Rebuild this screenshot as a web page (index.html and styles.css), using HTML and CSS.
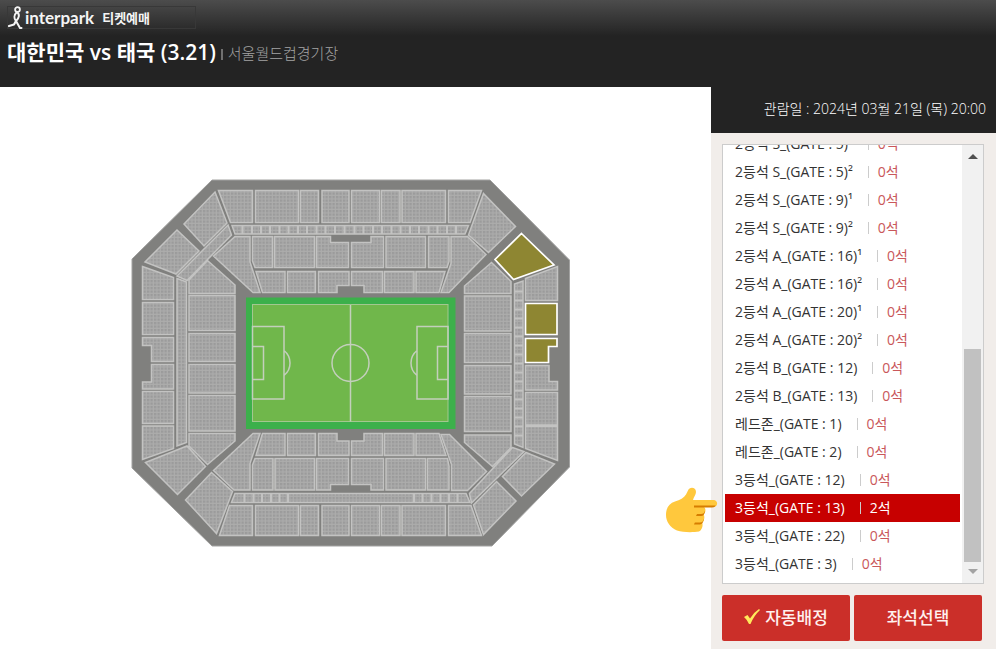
FILE: index.html
```html
<!DOCTYPE html>
<html lang="ko">
<head>
<meta charset="utf-8">
<title>interpark 티켓예매</title>
<link rel="stylesheet" href="styles.css">
</head>
<body>
<div class="app">
  <header class="header">
    <a class="logo" href="#">
      <svg class="logo-mark" width="16" height="24" viewBox="0 0 16 24" aria-hidden="true">
        <g fill="none" stroke="#f4f4f4" stroke-linecap="round" stroke-linejoin="round">
          <circle cx="9.500" cy="3.600" r="2.400" stroke-width="1.800"/>
          <path d="M8.500 6.500C6 9 5.800 12.500 8 15" stroke-width="2"/>
          <path d="M9.500 6.500C12.500 9.500 10.500 12.500 8 15L12 22H13.500" stroke-width="2"/>
          <path d="M8 15L6 18.500L1 20" stroke-width="2.200"/>
        </g>
      </svg>
      <span class="logo-name">interpark</span>
      <span class="logo-sub">티켓예매</span>
    </a>
    <div class="event">
      <h1 class="event-title">대한민국 vs 태국 (3.21)</h1>
      <span class="event-bar"></span>
      <span class="event-place">서울월드컵경기장</span>
    </div>
  </header>

  <div class="content">
    <main class="map">
      <svg class="stadium" width="440" height="368" viewBox="131 179 440 368" role="img" aria-label="서울월드컵경기장 좌석도">
        <defs>
          <pattern id="seats" x="0" y="0" width="3.5" height="3.5" patternUnits="userSpaceOnUse">
            <rect width="3.5" height="3.5" fill="#acacab"/>
            <rect width="2.3" height="2.3" fill="#9b9b9b"/>
          </pattern>
        </defs>
        <path d="M212 180H490L569.500 260V467L492 546H212L132 468V259Z" fill="#80807e" stroke="#a2a2a1"/>
        <g fill="url(#seats)" stroke="#c3c3c2" stroke-width="1.500">
          <!-- upper stand -->
          <path d="M218.500 190.500H252.500V222.500H230.500ZM255.500 190.500H298.500V222.500H255.500ZM300.500 190.500H318.500V222.500H300.500ZM322 190.500H349V222.500H322ZM351.500 190.500H379.500V222.500H351.500ZM381.500 190.500H400V222.500H381.500ZM402 190.500H445.500V222.500H402ZM448.500 190.500H481.500L470 222.500H448.500Z"/>
          <path d="M232 225.500H468.500L465 234H235Z"/>
          <path d="M242.500 226V234M252 226V234M261 226V234M270 226V234M279.500 226V234M288.500 226V234M298 226V234M307 226V234M316.500 226V234M325.500 226V234M335 226V234M344.500 226V234M354.500 226V234M363.500 226V234M373 226V234M382 226V234M391.500 226V234M400.500 226V234M410 226V234M419 226V234M428.500 226V234M437.500 226V234M447 226V234M456 226V234" stroke-width="2"/>
          <path d="M252.500 236.500H272.500V267.500H255L252.500 261ZM274.500 236.500H314.500V267.500H274.500ZM316.500 236.500H330.500V242.500H348.500V267.500H316.500ZM351.500 242.500H371V236.500H383.500V267.500H351.500ZM386 236.500H425.500V267.500H386ZM428.500 236.500H449V261.500L447 267.500H428.500Z"/>
          <path d="M256 271.500H285V292.500H262.500ZM287.500 271.500H315.500V292.500H287.500ZM318.500 271.500H349V285.500H337V292.500H318.500ZM351.500 271.500H382.500V292.500H364V285.500H351.500ZM384.500 271.500H414V292.500H384.500ZM416 271.500H445L439 292.500H416Z"/>
          <!-- upper corners -->
          <path d="M215 192L227 223L204 246L184 224ZM177 230L199 251L176 274L145 262ZM228 225L231.500 235L187 280.500L177 276ZM235 236.500H250V262L260 292.500H253L213.500 256ZM207.500 260.500L235 285V293.500H189V280Z"/>
          <path d="M483.500 193.500L515.500 226.500L488.500 252.500L468.500 235ZM451 236.500H467.500L486 254.500L449 292.500H441L451 263.500ZM491.500 262.500L511 281.500V293.500H464.500V286Z"/>
          <!-- left stand -->
          <path d="M142.500 266.500L173.500 277.500V299.500H142.500ZM142.500 302.500H173.500V334.500H142.500ZM142.500 337.500H173.500V361.500H151.500V345.500H142.500ZM151.500 364.500H173.500V389H142.500V382H151.500ZM142.500 391.500H173.500V423.500H142.500ZM142.500 426H173.500V448.500L142.500 459.500Z"/>
          <path d="M177 278.500L186.500 282V442.500L177 446Z"/>
          <path d="M189 295.500H235V330.500H189ZM189 333.500H235V361.500H189ZM189 364.500H235V393H189ZM189 395.500H235V431H189Z"/>
          <!-- right stand -->
          <path d="M525.500 278.500L557.500 266.500V300.500H525.500ZM525.500 365.500H549V381.500H557.500V390H525.500ZM525.500 392.500H557.500V425H525.500ZM525.500 426.500H557.500V460.500L525.500 448.500Z"/>
          <path d="M514.500 284L523 281V447.500L514.500 444Z"/>
          <path d="M515 291.500H523M515 300.500H523M515 309.500H523M515 318.500H523M515 327.500H523M515 336.500H523M515 345.500H523M515 354.500H523M515 363.500H523M515 372.500H523M515 381.500H523M515 390.500H523M515 399.500H523M515 408.500H523M515 417.500H523M515 426.500H523M515 435.500H523" stroke-width="2"/>
          <path d="M464.500 296H511V331H464.500ZM464.500 333.500H511V362.500H464.500ZM464.500 365.500H511V394H464.500ZM464.500 396.500H511V431.500H464.500Z"/>
          <!-- lower corners -->
          <path d="M145.500 462.500L187 446L205.500 466.500L177.500 494.500ZM211.500 472.500L232.500 491.500L216.500 533.500L185.500 500ZM253 433.500H260L250 463.500V490H234L213.500 470.500ZM189 433.500H235V441L207.500 464.500L189 446Z"/>
          <path d="M464.500 435H511V447.500L492.500 466.500L464.500 442.500ZM512.500 447.500L524 451.500L471.500 503L469.500 493.500ZM526 452.500L554.500 464L521.500 496L502.500 476.500ZM496.500 481.500L516 501L483.500 534.500L473.500 505ZM441 434.500H449.500L486.500 471.500L467.500 490.500H451.500V464.500Z"/>
          <!-- lower stand -->
          <path d="M262.500 433.500H285V455.500H256ZM287.500 433.500H315.500V455.500H287.500ZM318.500 433.500H337V441H349V455.500H318.500ZM351.500 441H364V433.500H382.500V455.500H351.500ZM384.500 433.500H414V455.500H384.500ZM416 433.500H439L446 455.500H416Z"/>
          <path d="M255 458.500H273V490H252.500V465ZM275 458.500H314.500V490H275ZM316.500 458.500H348.500V484.500H330.500V490H316.500ZM351.500 458.500H383.500V490H371V484.500H351.500ZM386 458.500H425.500V490H386ZM427.500 458.500H447.500L449 466V490H427.500Z"/>
          <path d="M235 493.500H466L470 502.500H231.500Z"/>
          <path d="M244.500 494V502M253.500 494V502M262 494V502M271 494V502M279.500 494V502M288 494V502M414 494V502M422.500 494V502M431.500 494V502M440.500 494V502M449 494V502M457.500 494V502" stroke-width="2"/>
          <path d="M229.500 505.500H252.500V535.500H219.500ZM255.500 505.500H298.500V535.500H255.500ZM300.500 505.500H318.500V535.500H300.500ZM322 505.500H349V535.500H322ZM351.500 505.500H379.500V535.500H351.500ZM381.500 505.500H400V535.500H381.500ZM402 505.500H445.500V535.500H402ZM448.500 505.500H471L481.500 535.500H448.500Z"/>
        </g>
        <!-- sections with seats left -->
        <path fill="#8e8632" stroke="#fff" stroke-width="1.700" d="M521.500 233.500L554 265L513.500 279.500L495 259.500ZM525.500 303.500H557V334.500H525.500ZM525.500 338.500H557V346.500H548.500V362.500H525.500Z"/>
        <!-- pitch -->
        <rect x="246" y="297.500" width="209.500" height="131.500" fill="#3cb04b"/>
        <rect x="252.500" y="304.500" width="195.500" height="117" fill="#70b74b" stroke="#a3c790"/>
        <g fill="none" stroke="#c3cfbc" stroke-width="1.500">
          <path d="M350.500 305V421.500M252.500 326.500H284V399H252.500ZM252.500 346.500H263.500V379.500H252.500M448 326.500H417V399H448ZM448 346.500H437.500V379.500H448M284 350.500A16 16 0 0 1 284 375.500M417 350.500A16 16 0 0 0 417 375.500"/>
          <circle cx="350.500" cy="363" r="18.500"/>
        </g>
      </svg>
    </main>

    <aside class="side">
      <p class="date">관람일 : 2024년 03월 21일 (목) 20:00</p>
      <div class="panel">
        <div class="listbox">
          <ul class="seats">
            <li><button class="seat" type="button"><span class="seat-name">2등석 S_(GATE : 5)¹</span><span class="seat-left">0석</span></button></li>
            <li><button class="seat" type="button"><span class="seat-name">2등석 S_(GATE : 5)²</span><span class="seat-left">0석</span></button></li>
            <li><button class="seat" type="button"><span class="seat-name">2등석 S_(GATE : 9)¹</span><span class="seat-left">0석</span></button></li>
            <li><button class="seat" type="button"><span class="seat-name">2등석 S_(GATE : 9)²</span><span class="seat-left">0석</span></button></li>
            <li><button class="seat" type="button"><span class="seat-name">2등석 A_(GATE : 16)¹</span><span class="seat-left">0석</span></button></li>
            <li><button class="seat" type="button"><span class="seat-name">2등석 A_(GATE : 16)²</span><span class="seat-left">0석</span></button></li>
            <li><button class="seat" type="button"><span class="seat-name">2등석 A_(GATE : 20)¹</span><span class="seat-left">0석</span></button></li>
            <li><button class="seat" type="button"><span class="seat-name">2등석 A_(GATE : 20)²</span><span class="seat-left">0석</span></button></li>
            <li><button class="seat" type="button"><span class="seat-name">2등석 B_(GATE : 12)</span><span class="seat-left">0석</span></button></li>
            <li><button class="seat" type="button"><span class="seat-name">2등석 B_(GATE : 13)</span><span class="seat-left">0석</span></button></li>
            <li><button class="seat" type="button"><span class="seat-name">레드존_(GATE : 1)</span><span class="seat-left">0석</span></button></li>
            <li><button class="seat" type="button"><span class="seat-name">레드존_(GATE : 2)</span><span class="seat-left">0석</span></button></li>
            <li><button class="seat" type="button"><span class="seat-name">3등석_(GATE : 12)</span><span class="seat-left">0석</span></button></li>
            <li><button class="seat selected" type="button"><span class="seat-name">3등석_(GATE : 13)</span><span class="seat-left">2석</span></button></li>
            <li><button class="seat" type="button"><span class="seat-name">3등석_(GATE : 22)</span><span class="seat-left">0석</span></button></li>
            <li><button class="seat" type="button"><span class="seat-name">3등석_(GATE : 3)</span><span class="seat-left">0석</span></button></li>
          </ul>
          <div class="scroll" aria-hidden="true">
            <svg class="scroll-arrow" width="10" height="5" viewBox="0 0 10 5"><path d="M0 5L5 0L10 5Z" fill="#505050"/></svg>
            <div class="scroll-thumb"></div>
            <svg class="scroll-arrow" width="10" height="5" viewBox="0 0 10 5"><path d="M0 0L5 5L10 0Z" fill="#a3a3a3"/></svg>
          </div>
        </div>
        <div class="actions">
          <button class="action" type="button">
            <svg width="16" height="15" viewBox="0 0 16 15" aria-hidden="true"><path d="M0 8L3.500 6L6 9.500Q9.500 3.500 15 0L16 1Q10 6.500 6.500 15H5Q3 10.500 0 8Z" fill="#ffe95c"/></svg>
            <span>자동배정</span>
          </button>
          <button class="action" type="button">좌석선택</button>
        </div>
      </div>
      <svg class="hand" width="52" height="46" viewBox="0 0 52 46" aria-hidden="true">
        <path d="M22 3.500C23.500-.5 30 0 30 5C30 8 27.500 10 27 13H47C52.500 13 52.500 20 47 20H38C40 21 40 26 37.500 27C39 29 38.500 34 36 35.500C37.500 38 36 43 33 44.500C27 45.500 17 45.500 11 43.500C4 40.500 0 34.500 0 28C0 21 3 16.500 9 14.500C14 13 18 11 20 7.500Z" fill="#ffc83d"/>
        <path d="M28 18Q38 16 50 16Q50 20.500 46 20.500H28ZM31 27Q36 26.500 39 24Q38.500 29 35 29H30ZM29 35Q35 35 38 32Q37 37 34 37.500H28Z" fill="#d67d00"/>
        <path d="M28 13H47Q51 14 50 18.500H28ZM30 21H38Q40 27 35 27H30ZM29 30H37Q39 35 34 35.500H28Z" fill="#ffc83d"/>
      </svg>
    </aside>
  </div>
</div>
</body>
</html>
```
FILE: styles.css
```css
* {
  box-sizing: border-box;
}

body {
  margin: 0;
  background: #fff;
  color: #333;
  font-family: "Open Sans", "Noto Sans CJK KR", sans-serif;
  font-size: 14px;
}

button {
  border: 0;
  padding: 0;
  background: none;
  color: inherit;
  font: inherit;
  cursor: pointer;
}

.app {
  display: flex;
  flex-direction: column;
  height: 100vh;
  margin-right: 8px;
}

.header {
  height: 87px;
  padding: 6px 7px 0;
  background: #232323 linear-gradient(#4c4c4c, #232323) no-repeat 0 0 / 100% 36px;
}

.logo {
  display: flex;
  align-items: center;
  width: 189px;
  height: 23px;
  border: 1px solid #383838;
  color: #f4f4f4;
  line-height: 22px;
  text-decoration: none;
}

.logo-mark {
  flex: none;
}

.logo-name {
  margin: 0 8px 0 1px;
  font-family: Lato, sans-serif;
  font-size: 17px;
  font-weight: 700;
}

.logo-sub {
  font-family: "Noto Sans CJK KR", sans-serif;
  font-size: 13px;
  font-weight: 700;
}

.event {
  display: flex;
  align-items: center;
  height: 46px;
}

.event-title {
  margin: 0;
  color: #fff;
  font-size: 21px;
  font-weight: 600;
  line-height: 28px;
}

.event-bar {
  width: 2px;
  height: 11px;
  margin: 4px 5px 0;
  background: #707070;
}

.event-place {
  color: #a3a3a3;
  font-size: 15px;
  font-weight: 300;
}

.content {
  display: flex;
  flex: 1;
  min-height: 0;
}

.map {
  display: grid;
  flex: 1;
  place-items: center;
  padding: 0 9px 10px 0;
}

.side {
  position: relative;
  display: flex;
  flex: none;
  flex-direction: column;
  width: 285px;
  background: #f1edea;
}

.date {
  height: 46px;
  margin: 0;
  padding-right: 10px;
  background: #232323;
  color: #fff;
  font-weight: 300;
  line-height: 44px;
  text-align: right;
  white-space: nowrap;
}

.panel {
  display: flex;
  flex: 1;
  flex-direction: column;
  gap: 11px;
  min-height: 0;
  padding: 11px 12px 8px 11px;
}

.listbox {
  display: flex;
  flex: 1;
  min-height: 0;
  overflow: hidden;
  border: 1px solid #ccc;
  background: #fff;
}

.seats {
  display: flex;
  flex: 1;
  flex-direction: column;
  justify-content: flex-end;
  margin: 0;
  padding: 0 2px 5px;
  list-style: none;
}

.seat {
  display: flex;
  align-items: baseline;
  width: 100%;
  height: 28px;
  padding-left: 10px;
  line-height: 28px;
  white-space: nowrap;
}

.seat-left {
  margin-left: 15px;
  padding-left: 9px;
  border-left: 1px solid #ccc;
  color: #c9575a;
  line-height: 12px;
}

.selected {
  background: #c70000;
}

.selected .seat-name,
.selected .seat-left {
  color: #fff;
}

.scroll {
  display: flex;
  flex: none;
  flex-direction: column;
  align-items: center;
  justify-content: space-between;
  width: 21px;
  padding: 9px 0;
  background: #f1f1f1;
}

.scroll-thumb {
  width: 17px;
  height: 213px;
  margin: auto 0 7px;
  background: #c1c1c1;
}

.actions {
  display: grid;
  grid-template-columns: 1fr 1fr;
  gap: 4px;
  padding-right: 2px;
}

.action {
  display: flex;
  align-items: center;
  justify-content: center;
  gap: 5px;
  height: 46px;
  padding-bottom: 3px;
  border-radius: 2px;
  background: #cb2f29;
  color: #fff0ee;
  font-family: "Noto Sans CJK KR", sans-serif;
  font-size: 17px;
  font-weight: 500;
}

.hand {
  position: absolute;
  top: 400px;
  left: -45px;
}
```
